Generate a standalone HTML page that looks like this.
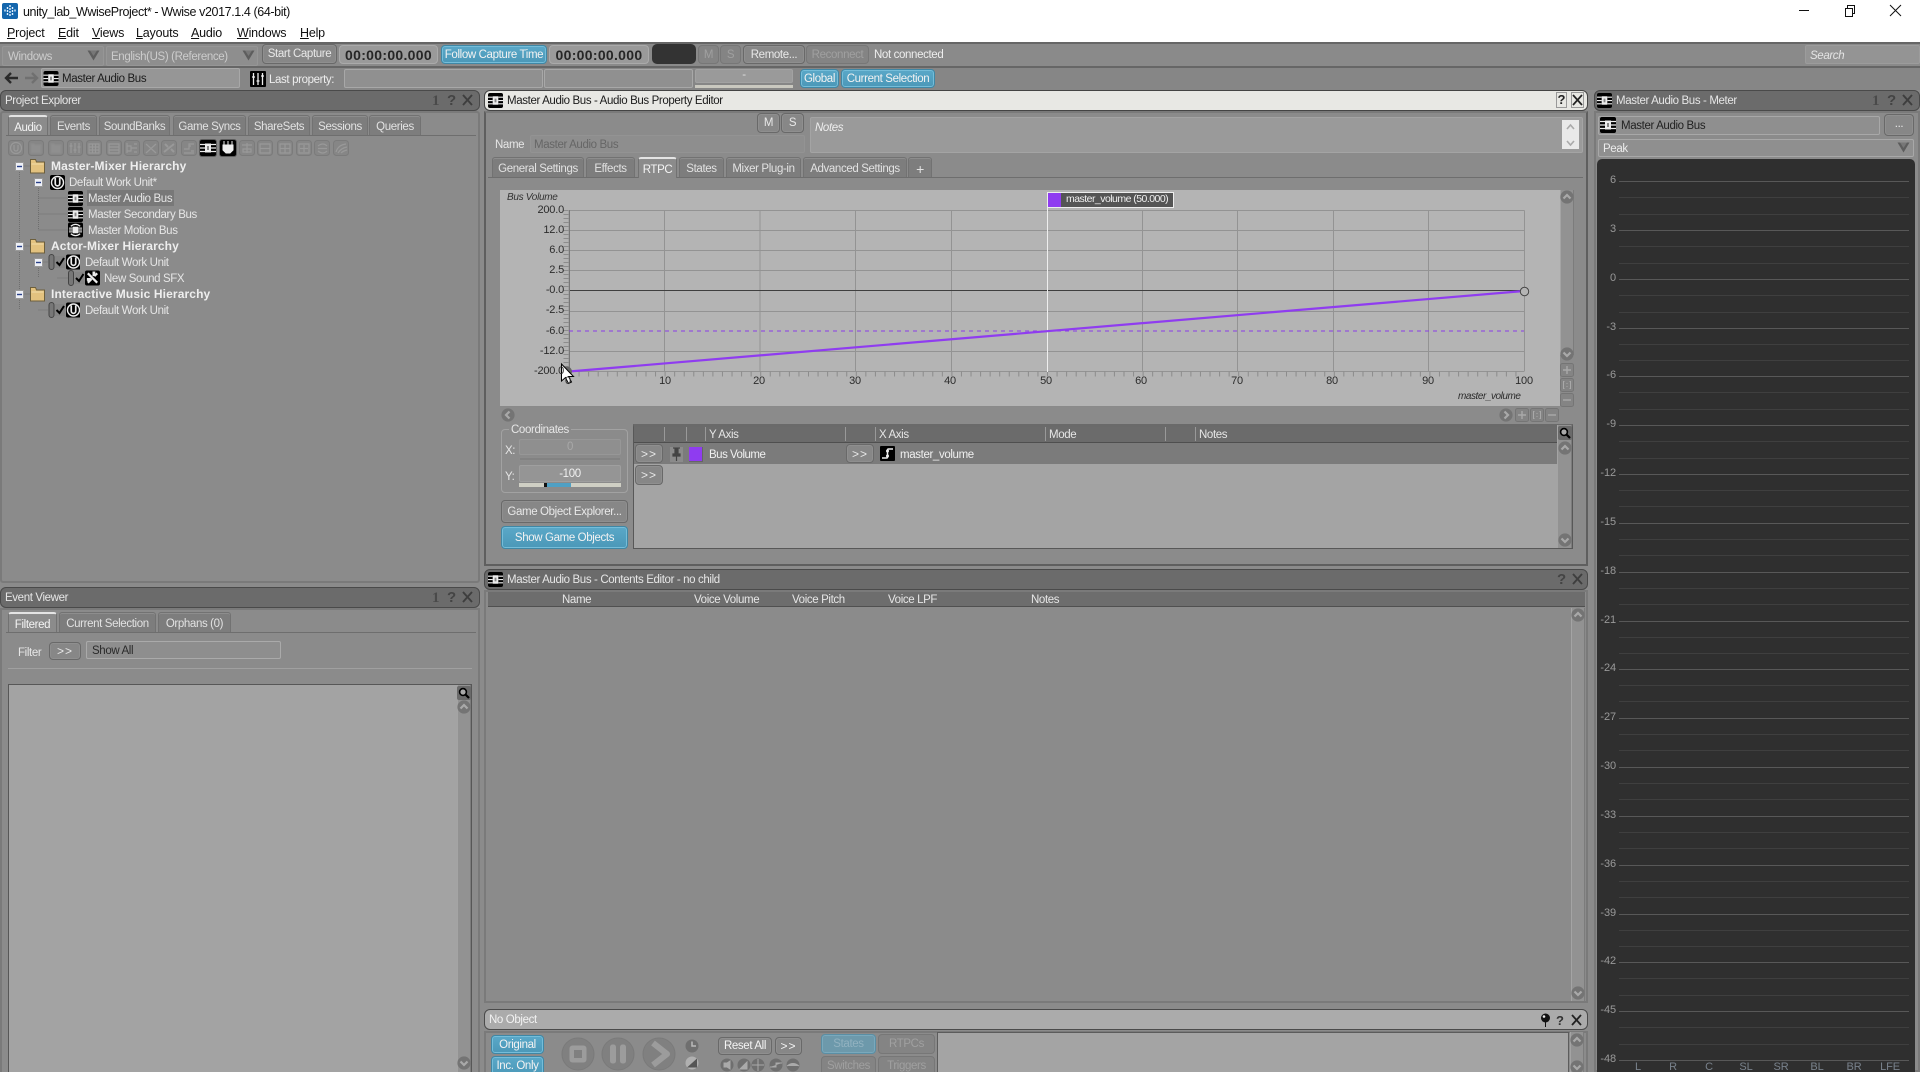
<!DOCTYPE html>
<html><head><meta charset="utf-8"><title>Wwise</title>
<style>
*{box-sizing:border-box}
html,body{margin:0;padding:0;width:1920px;height:1072px;overflow:hidden;background:#8b8b8b}
body{position:relative;font:11.5px "Liberation Sans",sans-serif;letter-spacing:-.37px;color:#e6e6e6}
div,svg.a{position:absolute;display:block}
p{position:absolute;margin:0;white-space:nowrap;line-height:14px}
p:not([class]){padding-top:1px}
.b{display:flex;align-items:center;justify-content:center;border:1px solid #696969;border-radius:4px;background:#878787;color:#e8e8e8;white-space:nowrap;box-shadow:inset 0 0 0 1px #8f8f8f}
.bl{background:linear-gradient(#5aa8c8,#4b98b8);border:1px solid #3f87a5;box-shadow:inset 0 0 0 1px #75bdd9;color:#f2f2f2}
.dis{color:#a0a0a0;background:#848484;border-color:#777;box-shadow:none}
.in{background:#969696;border:1px solid #a8a8a8;border-radius:2px;color:#2a2a2a}
.tt{background:#6b6b6b;border:1px solid #4a4a4a;border-radius:6px;height:21px;color:#e8e8e8}
.tab{top:115px;height:20px;padding-top:3px;background:#7d7d7d;border:1px solid #727272;border-bottom:0;border-radius:3px 3px 0 0;box-shadow:inset 0 1px 0 #8d8d8d;color:#e2e2e2;display:flex;align-items:center;justify-content:center}
.on{background:#8b8b8b;border-top:2px solid #e4e4e4;color:#f4f4f4}
.sb{background:#929292;border-left:1px solid #a4a4a4;border-right:1px solid #7c7c7c}
.dk{color:#2c2c2c;font-size:11px;letter-spacing:-.2px}
.ml{color:#999;left:1583px;width:33px;text-align:right;font-size:11px;letter-spacing:-.1px}
.ch{color:#79828c;top:1060px;font-size:11px;width:30px;text-align:center;letter-spacing:-.1px}
.h{font-weight:bold;color:#eee;font-size:12px;letter-spacing:.12px}
.g{letter-spacing:1px;font-size:12px}
.m{color:#111;font-size:12.5px;letter-spacing:-.2px;top:26px}
.tm{background:#9a9a9a;border-color:#aaa;color:#262626;font-weight:bold;font-size:14px;letter-spacing:.3px;box-shadow:none}
</style></head><body>

<svg width="0" height="0" style="position:absolute"><defs>
<symbol id="bus" viewBox="0 0 16 16"><rect width="16" height="16" rx="2" fill="#000"/><rect x="5" y="3.5" width="6" height="9" fill="#eee"/><path d="M0 4.5h5M0 8h5M0 11.5h5M11 4.5h5M11 8h5M11 11.5h5" stroke="#eee" stroke-width="1.2"/><rect x="7" y="6" width="2" height="4" fill="#888"/></symbol>
<symbol id="mot" viewBox="0 0 16 16"><rect width="16" height="16" rx="2" fill="#000"/><path d="M3 4Q8 0 13 4M3 12Q8 16 13 12" stroke="#eee" fill="none" stroke-width="1.4"/><rect x="5" y="4.5" width="6" height="7" fill="#eee"/><path d="M1 6h4M1 8h4M1 10h4M11 6h4M11 8h4M11 10h4" stroke="#eee"/></symbol>
<symbol id="wu" viewBox="0 0 16 16"><rect width="16" height="16" rx="2" fill="#000"/><circle cx="8" cy="8" r="6.4" fill="none" stroke="#eee" stroke-width="1.5"/><path d="M5.6 3v6.2a2.4 2.4 0 0 0 4.8 0V3" fill="none" stroke="#eee" stroke-width="1.8"/></symbol>
<symbol id="sfx" viewBox="0 0 16 16"><rect width="16" height="16" rx="2" fill="#000"/><path d="M3 3l10 10M3 13l4-4M10 6l3-3" stroke="#eee" stroke-width="2.4"/><path d="M8 1h3v5H8zM2 8h4v3H2z" fill="#eee"/></symbol>
<symbol id="fold" viewBox="0 0 15 16"><path d="M.5 4V1.5h5l1 2.5h8v11H.5z" fill="#e3c27f" stroke="#6d5f3c"/><path d="M1.5 6h12" stroke="#f2dca8"/></symbol>
<symbol id="plus" viewBox="0 0 9 9"><rect x=".5" y=".5" width="8" height="8" fill="#eef0f6" stroke="#999"/><path d="M2 4.5h5" stroke="#28408a" stroke-width="1.4"/></symbol>
<symbol id="up" viewBox="0 0 14 14"><circle cx="7" cy="7" r="6.6" fill="#747474"/><path d="M3.5 8.5L7 5l3.5 3.5" fill="none" stroke="#a9a9a9" stroke-width="2.2"/></symbol>
<symbol id="dn" viewBox="0 0 14 14"><circle cx="7" cy="7" r="6.6" fill="#747474"/><path d="M3.5 5.5L7 9l3.5-3.5" fill="none" stroke="#a9a9a9" stroke-width="2.2"/></symbol>
<symbol id="lf" viewBox="0 0 14 14"><circle cx="7" cy="7" r="6.6" fill="#747474"/><path d="M8.5 3.5L5 7l3.5 3.5" fill="none" stroke="#a9a9a9" stroke-width="2.2"/></symbol>
<symbol id="rt" viewBox="0 0 14 14"><circle cx="7" cy="7" r="6.6" fill="#747474"/><path d="M5.5 3.5L9 7l-3.5 3.5" fill="none" stroke="#a9a9a9" stroke-width="2.2"/></symbol>
<symbol id="mag" viewBox="0 0 14 14"><rect width="14" height="14" rx="2" fill="#6a6a6a"/><circle cx="6" cy="6" r="3.4" fill="#aaa" stroke="#000" stroke-width="1.6"/><path d="M8.5 8.5l3.5 3.5" stroke="#000" stroke-width="2.2"/></symbol>
<symbol id="dd" viewBox="0 0 13 11"><path d="M.5 .5h12L6.5 10.5z" fill="#5d5d5d"/><path d="M3 .5h7L6.5 6z" fill="#777"/></symbol>
<symbol id="chk" viewBox="0 0 32 16"><rect x="1" y=".5" width="5" height="15" rx="2.5" fill="#777" stroke="#444"/><rect x="7" y="2" width="10" height="12" fill="#858585"/><path d="M8.5 8l3 3 4.5-7" fill="none" stroke="#000" stroke-width="2"/></symbol>
<symbol id="plusb" viewBox="0 0 14 14"><rect x=".5" y=".5" width="13" height="13" rx="2" fill="#848484" stroke="#757575"/><path d="M3 7h8M7 3v8" stroke="#a9a9a9" stroke-width="1.4"/></symbol>
<symbol id="fit" viewBox="0 0 14 14"><rect x=".5" y=".5" width="13" height="13" rx="2" fill="#848484" stroke="#757575"/><path d="M4.5 3.5h-1v7h1M9.5 3.5h1v7h-1M7 5v1M7 8v1" fill="none" stroke="#a9a9a9"/></symbol>
<symbol id="minb" viewBox="0 0 14 14"><rect x=".5" y=".5" width="13" height="13" rx="2" fill="#848484" stroke="#757575"/><path d="M3 7h8" stroke="#a9a9a9" stroke-width="1.4"/></symbol>
<symbol id="gi" viewBox="0 0 16 16"><rect x=".5" y=".5" width="15" height="15" rx="3" fill="#868686" stroke="#7b7b7b"/></symbol>
<symbol id="q1" viewBox="0 0 46 16"><text x="2" y="13" font-size="15" font-weight="bold" font-family="Liberation Serif,serif" fill="#4a4a4a" letter-spacing="0">1</text><text x="17" y="13" font-size="15" font-weight="bold" font-family="Liberation Sans,sans-serif" fill="#444" letter-spacing="0">?</text><path d="M33 3l9 10M42 3l-9 10" stroke="#3e3e3e" stroke-width="1.9"/></symbol>
<symbol id="q2" viewBox="0 0 30 16"><text x="2" y="13" font-size="15" font-weight="bold" font-family="Liberation Sans,sans-serif" fill="#444" letter-spacing="0">?</text><path d="M18 3l9 10M27 3l-9 10" stroke="#3e3e3e" stroke-width="1.9"/></symbol>
</defs></svg>

<!-- title & menu -->
<div style="left:0;top:0;width:1920px;height:42px;background:#fff"></div>
<svg class="a" style="left:2px;top:3px" width="16" height="16" viewBox="0 0 16 16"><rect width="16" height="16" rx="2" fill="#1466ad"/><path d="M8 2v12M5.5 4v8M10.5 4v8M3 6.500v3M13 6.500v3" stroke="#dff0ff" stroke-width="1.4" stroke-dasharray="2 1"/></svg>
<p style="left:23px;top:4px;color:#111;font-size:12.5px;letter-spacing:-.4px">unity_lab_WwiseProject* - Wwise v2017.1.4 (64-bit)</p>
<p class="m" style="left:7px"><u>P</u>roject</p>
<p class="m" style="left:58px"><u>E</u>dit</p>
<p class="m" style="left:92px"><u>V</u>iews</p>
<p class="m" style="left:136px"><u>L</u>ayouts</p>
<p class="m" style="left:191px"><u>A</u>udio</p>
<p class="m" style="left:237px"><u>W</u>indows</p>
<p class="m" style="left:300px"><u>H</u>elp</p>
<svg class="a" style="left:1795px;top:0" width="125" height="22"><path d="M4 10.500h10" stroke="#111"/><path d="M50.500 8.500h7v8h-7zM52.500 8v-2.500h7v8h-2" fill="none" stroke="#111"/><path d="M95 5l11 11M106 5L95 16" stroke="#111"/></svg>

<!-- toolbar -->
<div style="left:0;top:42px;width:1920px;height:2px;background:#666"></div>
<div style="left:0;top:44px;width:1920px;height:22px;background:#8a8a8a"></div>
<div style="left:0;top:66px;width:1920px;height:2px;background:#666"></div>
<div style="left:0;top:68px;width:1920px;height:22px;background:#868686"></div>

<div class="in" style="left:2px;top:46px;width:102px;height:20px;background:#8e8e8e;border-color:#969696"></div>
<p style="left:8px;top:49px;color:#ccc">Windows</p>
<svg class="a" style="left:87px;top:50px" width="13" height="11"><use href="#dd"/></svg>
<div class="in" style="left:106px;top:46px;width:152px;height:20px;background:#8e8e8e;border-color:#969696"></div>
<p style="left:111px;top:49px;color:#ccc">English(US) (Reference)</p>
<svg class="a" style="left:242px;top:50px" width="13" height="11"><use href="#dd"/></svg>
<div class="b" style="left:262px;top:44px;width:75px;height:20px">Start Capture</div>
<div class="b tm" style="left:339px;top:45px;width:99px;height:19px">00:00:00.000</div>
<div class="b bl" style="left:441px;top:45px;width:106px;height:19px">Follow Capture Time</div>
<div class="b tm" style="left:549px;top:45px;width:100px;height:19px">00:00:00.000</div>
<div style="left:652px;top:44px;width:44px;height:20px;background:#333;border-radius:5px"></div>
<div class="b dis" style="left:698px;top:45px;width:21px;height:19px">M</div>
<div class="b dis" style="left:720px;top:45px;width:21px;height:19px">S</div>
<div class="b" style="left:743px;top:45px;width:62px;height:19px">Remote...</div>
<div class="b dis" style="left:806px;top:45px;width:63px;height:19px">Reconnect</div>
<p style="left:874px;top:47px;color:#eee">Not connected</p>
<div class="in" style="left:1805px;top:45px;width:115px;height:19px;background:#949494;border-color:#9c9c9c"></div>
<p style="left:1810px;top:48px;color:#e4e4e4;font-style:italic">Search</p>

<svg class="a" style="left:3px;top:70px" width="36" height="16"><path d="M15 8H3M8 3L3 8l5 5" fill="none" stroke="#2a2a2a" stroke-width="2.4"/><path d="M22 8h12M29 3l5 5-5 5" fill="none" stroke="#707070" stroke-width="2.4"/></svg>
<div class="in" style="left:41px;top:68px;width:199px;height:20px"></div>
<svg class="a" style="left:43px;top:71px" width="16" height="15"><use href="#bus"/></svg>
<p style="left:62px;top:71px;color:#1c1c1c">Master Audio Bus</p>
<svg class="a" style="left:250px;top:71px" width="16" height="16" viewBox="0 0 16 16"><rect width="16" height="16" rx="1" fill="#000"/><path d="M3.500 2v12M8 2v12M12.500 2v12M2 6h3M6.500 10h3M11 5h3" stroke="#eee" stroke-width="1.3"/></svg>
<p style="left:269px;top:72px;color:#eee">Last property:</p>
<div class="in" style="left:344px;top:69px;width:199px;height:19px;background:#909090"></div>
<div class="in" style="left:544px;top:69px;width:149px;height:19px;background:#909090"></div>
<div style="left:695px;top:69px;width:98px;height:14px;background:#9a9a9a;border:1px solid #a2a2a2;border-radius:2px;color:#ddd;text-align:center;line-height:11px">-</div>
<div style="left:695px;top:85px;width:98px;height:3px;background:#c9c8bf"></div>
<div class="b bl" style="left:800px;top:69px;width:39px;height:19px">Global</div>
<div class="b bl" style="left:841px;top:69px;width:94px;height:19px">Current Selection</div>

<!-- Project Explorer -->
<div class="tt" style="left:0;top:90px;width:480px"></div>
<p style="left:5px;top:93px">Project Explorer</p>
<svg class="a" style="left:430px;top:92px" width="46" height="16"><use href="#q1"/></svg>
<div style="left:0;top:111px;width:480px;height:472px;border:2px solid #7a7a7a;background:#8b8b8b;border-radius:3px"></div>
<div style="left:6px;top:135px;width:470px;height:1px;background:#6e6e6e"></div>
<div class="tab on" style="left:8px;width:40px">Audio</div>
<div class="tab" style="left:50px;width:47px">Events</div>
<div class="tab" style="left:99px;width:71px">SoundBanks</div>
<div class="tab" style="left:173px;width:73px">Game Syncs</div>
<div class="tab" style="left:248px;width:62px">ShareSets</div>
<div class="tab" style="left:312px;width:56px">Sessions</div>
<div class="tab" style="left:369px;width:52px">Queries</div>

<svg class="a" style="left:0;top:130px" width="360" height="30">
<g><use href="#gi" x="8" y="10" width="16" height="16"/><use href="#gi" x="28" y="10" width="16" height="16"/><use href="#gi" x="48" y="10" width="16" height="16"/><use href="#gi" x="67" y="10" width="16" height="16"/><use href="#gi" x="86" y="10" width="16" height="16"/><use href="#gi" x="106" y="10" width="16" height="16"/><use href="#gi" x="124" y="10" width="16" height="16"/><use href="#gi" x="143" y="10" width="16" height="16"/><use href="#gi" x="161" y="10" width="16" height="16"/><use href="#gi" x="181" y="10" width="16" height="16"/><use href="#gi" x="239" y="10" width="16" height="16"/><use href="#gi" x="257" y="10" width="16" height="16"/><use href="#gi" x="277" y="10" width="16" height="16"/><use href="#gi" x="296" y="10" width="16" height="16"/><use href="#gi" x="314" y="10" width="16" height="16"/><use href="#gi" x="333" y="10" width="16" height="16"/></g>
<g fill="none" stroke="#999" stroke-width="1.2">
<circle cx="16" cy="18" r="5.500"/><path d="M14 15v4a2 2 0 0 0 4 0v-4"/>
<path d="M31 23v-9h3l1 1h6v8zM51 23v-9h3l1 1h6v8z" fill="#8f8f8f" stroke="#8c8c8c"/>
<path d="M71 13v10M75 13v10M79 13v10M69.500 16h3M73.500 20h3M77.500 17h3"/>
<path d="M89 14h10v9H89zM89 17h10M89 20h10M92.500 14v9M95.500 14v9"/>
<path d="M109 14h10v9h-10zM109 17h10M109 20h10"/>
<path d="M127 13v10M127 16h4v5h-4M134 14h3M134 18h3M131 18h3M134 22h3"/>
<path d="M146 14l10 9M156 14l-10 9"/>
<path d="M164 22l10-8M165 14l3 3M171 19l3 3" stroke-width="2"/>
<path d="M184 23h10M184 19h5v-5h5M189 16h2M191 21h3"/>
<path d="M242 15h10M247 13v10M243 19h8v3h-8z"/>
<path d="M260 14h10v9h-10zM260 18.500h10"/>
<path d="M280 14h10v9h-10zM285 14v9M280 18.500h10"/>
<path d="M299 14h10v9h-10zM304 15v7M300 18.500h8"/>
<path d="M318 16q5-4 9 0M318 21q5 4 9 0M318 18.500h9"/>
<path d="M336 22q2-7 10-8M338 23q3-5 9-6M341 23q2-2 6-3"/>
</g>
<rect x="199" y="9" width="18" height="18" rx="3" fill="#5c5c5c"/><use href="#bus" x="200" y="10" width="16" height="16"/>
<rect x="219" y="9" width="18" height="18" rx="3" fill="#5c5c5c"/><rect x="220" y="10" width="16" height="16" rx="2" fill="#000"/><path d="M224 11v4M228 11v4M232 11v4M223 15h10v5l-3 3h-4l-3-3z" fill="#eee" stroke="#eee"/>
</svg>

<svg class="a" style="left:0;top:155px" width="200" height="170"><path d="M19.500 11V155M19.500 11H30M38.500 27V75M38.500 43H68M38.500 59H68M38.500 75H68M19.500 91H30M38.500 107V123M38.500 107H48M57.500 123H68M19.500 139H30M38.500 155H48" stroke="#6e6e6e" stroke-dasharray="1 1" fill="none"/></svg>
<svg class="a" style="left:15px;top:162px" width="9" height="9"><use href="#plus"/></svg>
<svg class="a" style="left:30px;top:158px" width="15" height="16"><use href="#fold"/></svg>
<p class="h" style="left:51px;top:159px">Master-Mixer Hierarchy</p>
<svg class="a" style="left:34px;top:178px" width="9" height="9"><use href="#plus"/></svg>
<svg class="a" style="left:50px;top:175px" width="15" height="15"><use href="#wu"/></svg>
<p style="left:69px;top:175px">Default Work Unit*</p>
<svg class="a" style="left:68px;top:191px" width="15" height="15"><use href="#bus"/></svg>
<div style="left:87px;top:190px;width:87px;height:16px;background:#787878"></div>
<p style="left:88px;top:191px">Master Audio Bus</p>
<svg class="a" style="left:68px;top:207px" width="15" height="15"><use href="#bus"/></svg>
<p style="left:88px;top:207px">Master Secondary Bus</p>
<svg class="a" style="left:68px;top:222px" width="15" height="16"><use href="#mot"/></svg>
<p style="left:88px;top:223px">Master Motion Bus</p>
<svg class="a" style="left:15px;top:242px" width="9" height="9"><use href="#plus"/></svg>
<svg class="a" style="left:30px;top:238px" width="15" height="16"><use href="#fold"/></svg>
<p class="h" style="left:51px;top:239px">Actor-Mixer Hierarchy</p>
<svg class="a" style="left:34px;top:258px" width="9" height="9"><use href="#plus"/></svg>
<svg class="a" style="left:48px;top:254px" width="32" height="16"><use href="#chk"/><use href="#wu" x="18" y="0.5" width="15" height="15"/></svg>
<p style="left:85px;top:255px">Default Work Unit</p>
<svg class="a" style="left:67px;top:270px" width="33" height="16"><use href="#chk"/><use href="#sfx" x="18" y="0.5" width="15" height="15"/></svg>
<p style="left:104px;top:271px">New Sound SFX</p>
<svg class="a" style="left:15px;top:290px" width="9" height="9"><use href="#plus"/></svg>
<svg class="a" style="left:30px;top:286px" width="15" height="16"><use href="#fold"/></svg>
<p class="h" style="left:51px;top:287px">Interactive Music Hierarchy</p>
<svg class="a" style="left:48px;top:302px" width="32" height="16"><use href="#chk"/><use href="#wu" x="18" y="0.5" width="15" height="15"/></svg>
<p style="left:85px;top:303px">Default Work Unit</p>

<!-- Event Viewer -->
<div class="tt" style="left:0;top:587px;width:480px"></div>
<p style="left:5px;top:590px">Event Viewer</p>
<svg class="a" style="left:430px;top:589px" width="46" height="16"><use href="#q1"/></svg>
<div style="left:0;top:608px;width:480px;height:464px;border:2px solid #7a7a7a;border-bottom:0;background:#8b8b8b"></div>
<div style="left:6px;top:632px;width:470px;height:1px;background:#6e6e6e"></div>
<div class="tab on" style="left:8px;top:612px;width:49px">Filtered</div>
<div class="tab" style="left:59px;top:612px;width:97px">Current Selection</div>
<div class="tab" style="left:158px;top:612px;width:73px">Orphans (0)</div>
<p style="left:18px;top:645px">Filter</p>
<div class="b g" style="left:49px;top:642px;width:32px;height:18px">&gt;&gt;</div>
<div class="in" style="left:86px;top:641px;width:195px;height:18px;background:#8e8e8e;border-color:#aaa"></div>
<p style="left:92px;top:643px;color:#2b2b2b">Show All</p>
<div style="left:8px;top:668px;width:464px;height:1px;background:#a0a0a0"></div>
<div style="left:8px;top:684px;width:464px;height:388px;background:#a3a3a3;border:1px solid #575757;border-bottom:0"></div>
<div class="sb" style="left:457px;top:685px;width:14px;height:387px"></div>
<svg class="a" style="left:457px;top:686px" width="14" height="14"><use href="#mag"/></svg>
<svg class="a" style="left:457px;top:700px" width="14" height="14"><use href="#up"/></svg>
<svg class="a" style="left:457px;top:1056px" width="14" height="14"><use href="#dn"/></svg>

<!-- Property editor -->
<div style="left:484px;top:90px;width:1104px;height:21px;background:#e8e8e4;border:1px solid #444;border-radius:6px"></div>
<svg class="a" style="left:488px;top:93px" width="15" height="15"><use href="#bus"/></svg>
<p style="left:507px;top:93px;color:#1b1b1b">Master Audio Bus - Audio Bus Property Editor</p>
<div style="left:1556px;top:92px;width:11px;height:16px;border:1px solid #999;color:#222;font-weight:bold;font-size:13px;line-height:14px;text-align:center;letter-spacing:0">?</div>
<svg class="a" style="left:1571px;top:92px" width="13" height="16"><rect x=".5" y=".5" width="12" height="15" fill="none" stroke="#999"/><path d="M2 3l9 10M11 3l-9 10" stroke="#222" stroke-width="1.7"/></svg>
<div style="left:484px;top:111px;width:1104px;height:455px;border:2px solid #5f5f5f;border-top:2px solid #7a7a7a;background:#8b8b8b"></div>
<div class="b" style="left:757px;top:113px;width:23px;height:20px">M</div>
<div class="b" style="left:781px;top:113px;width:23px;height:20px">S</div>
<p style="left:495px;top:137px">Name</p>
<div class="in" style="left:530px;top:135px;width:275px;height:18px;background:#8e8e8e;border-color:#939393"></div>
<p style="left:534px;top:137px;color:#666">Master Audio Bus</p>
<div class="in" style="left:810px;top:117px;width:773px;height:36px;background:#9a9a9a;border-color:#a4a4a4"></div>
<p style="left:815px;top:120px;font-style:italic;color:#eee">Notes</p>
<div style="left:1562px;top:120px;width:17px;height:29px;background:#e9e9e9"></div>
<svg class="a" style="left:1562px;top:120px" width="17" height="29"><path d="M5 9l3.500-4 3.500 4M5 21l3.500 4 3.500-4" fill="none" stroke="#aaa" stroke-width="1.6"/></svg>
<div style="left:488px;top:177px;width:1095px;height:1px;background:#6e6e6e"></div>
<div class="tab" style="left:492px;top:157px;width:92px">General Settings</div>
<div class="tab" style="left:586px;top:157px;width:49px">Effects</div>
<div class="tab on" style="left:638px;top:157px;width:39px;height:21px">RTPC</div>
<div class="tab" style="left:679px;top:157px;width:45px">States</div>
<div class="tab" style="left:726px;top:157px;width:75px">Mixer Plug-in</div>
<div class="tab" style="left:803px;top:157px;width:104px">Advanced Settings</div>
<div class="tab" style="left:908px;top:157px;width:24px;font-size:14px">+</div>

<!-- graph -->
<div style="left:500px;top:190px;width:1060px;height:217px;background:#b4b4b4;border-bottom:1px solid #8a8a8a"></div>
<svg class="a" style="left:0;top:0" width="1920" height="1072">
<path d="M569 210.500V371M664.500 210.500V371M760 210.500V371M855.500 210.500V371M951.500 210.500V371M1142.500 210.500V371M1237.500 210.500V371M1333.500 210.500V371M1428.500 210.500V371M1524.500 210.500V371" stroke="#939393"/>
<path d="M569 210.500H1524.500M569 230.500H1524.500M569 250.500H1524.500M569 270.500H1524.500M569 311.500H1524.500M569 351.500H1524.500M569 371.500H1524.500" stroke="#939393"/>
<path d="M569 290.500H1524.500" stroke="#3f3f3f"/>
<path d="M569.500 210V372" stroke="#777"/>
<path d="M566 210V371" stroke="#8c8c8c" stroke-width="5" stroke-dasharray="1 3"/>
<path d="M569 374H1524" stroke="#8c8c8c" stroke-width="5" stroke-dasharray="1 8.560"/>
<path d="M569 331H1524" stroke="#8a3be8" stroke-dasharray="4 4"/>
<path d="M1047.500 207V372" stroke="#eee"/>
<path d="M569 371.500L1524 291" stroke="#8f3cf0" stroke-width="2.200"/>
<circle cx="1524.500" cy="291.500" r="4.200" fill="#b4b4b4" stroke="#444"/>
<circle cx="567" cy="371.500" r="5" fill="#666"/>
<path d="M561.500 364V381l4-3.500 3 6 3-1.500-3-5.500h5z" fill="#fff" stroke="#000"/>
</svg>
<p style="left:507px;top:190px;font-style:italic;font-size:10px;color:#333;letter-spacing:-.3px">Bus Volume</p>
<p class="dk" style="left:520px;top:203px;width:44px;text-align:right">200.0</p>
<p class="dk" style="left:520px;top:223px;width:44px;text-align:right">12.0</p>
<p class="dk" style="left:520px;top:243px;width:44px;text-align:right">6.0</p>
<p class="dk" style="left:520px;top:263px;width:44px;text-align:right">2.5</p>
<p class="dk" style="left:520px;top:283px;width:44px;text-align:right">-0.0</p>
<p class="dk" style="left:520px;top:303px;width:44px;text-align:right">-2.5</p>
<p class="dk" style="left:520px;top:324px;width:44px;text-align:right">-6.0</p>
<p class="dk" style="left:520px;top:344px;width:44px;text-align:right">-12.0</p>
<p class="dk" style="left:520px;top:364px;width:44px;text-align:right">-200.0</p>
<p class="dk" style="left:548px;top:374px;width:40px;text-align:center">0</p>
<p class="dk" style="left:645px;top:374px;width:40px;text-align:center">10</p>
<p class="dk" style="left:739px;top:374px;width:40px;text-align:center">20</p>
<p class="dk" style="left:835px;top:374px;width:40px;text-align:center">30</p>
<p class="dk" style="left:930px;top:374px;width:40px;text-align:center">40</p>
<p class="dk" style="left:1026px;top:374px;width:40px;text-align:center">50</p>
<p class="dk" style="left:1121px;top:374px;width:40px;text-align:center">60</p>
<p class="dk" style="left:1217px;top:374px;width:40px;text-align:center">70</p>
<p class="dk" style="left:1312px;top:374px;width:40px;text-align:center">80</p>
<p class="dk" style="left:1408px;top:374px;width:40px;text-align:center">90</p>
<p class="dk" style="left:1504px;top:374px;width:40px;text-align:center">100</p>
<p class="dk" style="left:1458px;top:390px;font-style:italic;font-size:10px;letter-spacing:-.45px">master_volume</p>
<div style="left:1047px;top:192px;width:127px;height:16px;background:#555;border:1px solid #eee"></div>
<div style="left:1048px;top:193px;width:13px;height:14px;background:#8f3cf0"></div>
<p class="t" style="left:1066px;top:192px;font-size:10.5px;color:#f0f0f0;letter-spacing:-.53px">master_volume (50.000)</p>

<div class="sb" style="left:1560px;top:190px;width:14px;height:165px"></div>
<svg class="a" style="left:1560px;top:190px" width="14" height="14"><use href="#up"/></svg>
<svg class="a" style="left:1560px;top:347px" width="14" height="14"><use href="#dn"/></svg>
<svg class="a" style="left:1560px;top:363px" width="14" height="14"><use href="#plusb"/></svg>
<svg class="a" style="left:1560px;top:378px" width="14" height="14"><use href="#fit"/></svg>
<svg class="a" style="left:1560px;top:393px" width="14" height="14"><use href="#minb"/></svg>
<svg class="a" style="left:501px;top:408px" width="14" height="14"><use href="#lf"/></svg>
<svg class="a" style="left:1499px;top:408px" width="14" height="14"><use href="#rt"/></svg>
<svg class="a" style="left:1515px;top:408px" width="14" height="14"><use href="#plusb"/></svg>
<svg class="a" style="left:1530px;top:408px" width="14" height="14"><use href="#fit"/></svg>
<svg class="a" style="left:1545px;top:408px" width="14" height="14"><use href="#minb"/></svg>

<!-- coordinates -->
<div style="left:501px;top:429px;width:127px;height:64px;border:1px solid #a2a2a2;border-radius:4px"></div>
<p style="left:509px;top:422px;background:#8b8b8b;padding:1px 2px 0">Coordinates</p>
<p style="left:505px;top:443px">X:</p>
<p style="left:505px;top:469px">Y:</p>
<div style="left:519px;top:439px;width:102px;height:16px;background:#8f8f8f;border:1px solid #979797;border-radius:2px;text-align:center;color:#a8a8a8;line-height:15px">0</div>
<div style="left:519px;top:457px;width:102px;height:4px;background:#828282;border:1px solid #8c8c8c"></div>
<div style="left:519px;top:465px;width:102px;height:17px;background:#959595;border:1px solid #9f9f9f;border-radius:2px;text-align:center;color:#f0f0f0;line-height:16px">-100</div>
<div style="left:519px;top:483px;width:102px;height:4px;background:#cfcfc4"></div>
<div style="left:547px;top:483px;width:24px;height:4px;background:#4fa0c4"></div>
<div style="left:544px;top:483px;width:3px;height:4px;background:#111"></div>
<div class="b" style="left:501px;top:500px;width:127px;height:23px">Game Object Explorer...</div>
<div class="b bl" style="left:501px;top:526px;width:127px;height:23px">Show Game Objects</div>

<!-- list -->
<div style="left:633px;top:424px;width:940px;height:125px;background:#a4a4a4;border:1px solid #585858;border-top:3px solid #6a6a6a"></div>
<div style="left:634px;top:427px;width:923px;height:15px;background:#6b6b6b"></div>
<div style="left:634px;top:442px;width:923px;height:1px;background:#4f4f4f"></div>
<div style="left:634px;top:443px;width:923px;height:21px;background:#7b7b7b"></div>
<svg class="a" style="left:0;top:0" width="1300" height="445"><path d="M664.500 427V441M686.500 427V441M705.500 427V441M845.500 427V441M875.500 427V441M1045.500 427V441M1165.500 427V441M1195.500 427V441" stroke="#999"/></svg>
<p style="left:709px;top:427px">Y Axis</p>
<p style="left:879px;top:427px">X Axis</p>
<p style="left:1049px;top:427px">Mode</p>
<p style="left:1199px;top:427px">Notes</p>
<div class="b g" style="left:635px;top:444px;width:28px;height:19px">&gt;&gt;</div>
<div style="left:670px;top:447px;width:13px;height:15px;background:#8b8b8b"></div>
<svg class="a" style="left:670px;top:447px" width="13" height="15"><path d="M3 1h7M5 1v6H3v2h7V7H8V1M6.500 9v5" fill="#444" stroke="#444" stroke-width="1.2"/></svg>
<div style="left:689px;top:447px;width:14px;height:15px;background:#8f3cf0;border-right:1px solid #666;border-bottom:1px solid #666"></div>
<p style="left:709px;top:447px;color:#f0f0f0;letter-spacing:-.5px">Bus Volume</p>
<div class="b g" style="left:846px;top:444px;width:28px;height:19px">&gt;&gt;</div>
<svg class="a" style="left:880px;top:446px" width="15" height="15" viewBox="0 0 15 15"><rect width="15" height="15" rx="1" fill="#000"/><path d="M13 3H8.500a1 1 0 0 0-1 1v7a1 1 0 0 1-1 1H2" fill="none" stroke="#eee" stroke-width="1.5"/><circle cx="7.500" cy="5" r="1.500" fill="#eee"/><circle cx="7.500" cy="10" r="1.500" fill="#eee"/></svg>
<p style="left:900px;top:447px;color:#f0f0f0">master_volume</p>
<div class="b g" style="left:635px;top:465px;width:28px;height:20px">&gt;&gt;</div>
<div class="sb" style="left:1557px;top:425px;width:15px;height:123px"></div>
<svg class="a" style="left:1558px;top:426px" width="14" height="14"><use href="#mag"/></svg>
<svg class="a" style="left:1558px;top:441px" width="14" height="14"><use href="#up"/></svg>
<svg class="a" style="left:1558px;top:533px" width="14" height="14"><use href="#dn"/></svg>

<!-- Contents editor -->
<div class="tt" style="left:484px;top:569px;width:1104px"></div>
<svg class="a" style="left:488px;top:572px" width="15" height="15"><use href="#bus"/></svg>
<p style="left:507px;top:572px">Master Audio Bus - Contents Editor - no child</p>
<svg class="a" style="left:1555px;top:571px" width="30" height="16"><use href="#q2"/></svg>
<div style="left:484px;top:590px;width:1104px;height:413px;border:2px solid #7a7a7a;background:#8b8b8b"></div>
<div style="left:488px;top:592px;width:1097px;height:15px;background:#6d6d6d;border-bottom:1px solid #505050"></div>
<p style="left:562px;top:592px">Name</p>
<p style="left:694px;top:592px">Voice Volume</p>
<p style="left:792px;top:592px">Voice Pitch</p>
<p style="left:888px;top:592px">Voice LPF</p>
<p style="left:1031px;top:592px">Notes</p>
<div class="sb" style="left:1571px;top:608px;width:14px;height:393px"></div>
<svg class="a" style="left:1571px;top:608px" width="14" height="14"><use href="#up"/></svg>
<svg class="a" style="left:1571px;top:986px" width="14" height="14"><use href="#dn"/></svg>

<!-- No Object -->
<div style="left:484px;top:1009px;width:1104px;height:21px;background:#ababab;border:1px solid #4a4a4a;border-radius:6px"></div>
<p style="left:489px;top:1012px;color:#f2f2f2">No Object</p>
<svg class="a" style="left:1539px;top:1013px" width="46" height="14" viewBox="0 0 46 14"><circle cx="6.500" cy="5" r="4.500" fill="#111"/><circle cx="5" cy="3.500" r="1.300" fill="#eee"/><path d="M6.500 9v5" stroke="#111"/><text x="17" y="12" font-size="13" font-weight="bold" font-family="Liberation Sans,sans-serif" fill="#333" letter-spacing="0">?</text><path d="M33 2l9 10M42 2l-9 10" stroke="#222" stroke-width="1.800"/></svg>
<div style="left:484px;top:1031px;width:1104px;height:41px;border:2px solid #7a7a7a;border-bottom:0;background:#8b8b8b"></div>
<div class="b bl" style="left:491px;top:1035px;width:53px;height:19px">Original</div>
<div class="b bl" style="left:491px;top:1056px;width:53px;height:20px">Inc. Only</div>
<svg class="a" style="left:555px;top:1034px" width="165" height="38" viewBox="0 0 165 38">
<circle cx="23" cy="20" r="16" fill="#808080" stroke="#7a7a7a"/><rect x="14.500" y="11.500" width="17" height="17" rx="3" fill="#9c9c9c"/><rect x="19" y="16" width="8" height="8" fill="#808080"/>
<circle cx="63" cy="20" r="16" fill="#808080" stroke="#7a7a7a"/><rect x="55" y="10.500" width="6" height="19" rx="2.500" fill="#9c9c9c"/><rect x="65" y="10.500" width="6" height="19" rx="2.500" fill="#9c9c9c"/>
<circle cx="104" cy="20" r="16" fill="#808080" stroke="#7a7a7a"/><path d="M98 9l14 11-14 11" fill="none" stroke="#9c9c9c" stroke-width="6" stroke-linejoin="round"/>
<circle cx="137" cy="12" r="6.500" fill="#6f6f6f"/><path d="M137 7.500V12h4" fill="none" stroke="#bbb" stroke-width="1.500"/>
<circle cx="137" cy="29" r="6.500" fill="#b0b0b0"/><path d="M132 33.500l10-9v9z" fill="#555"/>
</svg>
<div class="b" style="left:718px;top:1037px;width:54px;height:18px;color:#f4f4f4">Reset All</div>
<div class="b g" style="left:775px;top:1037px;width:27px;height:18px;color:#f4f4f4">&gt;&gt;</div>
<svg class="a" style="left:720px;top:1057px" width="82" height="15" viewBox="0 0 82 15"><g fill="#6f6f6f"><circle cx="7" cy="8" r="6.500"/><circle cx="24" cy="8" r="6.500"/><circle cx="38" cy="8" r="6.500"/><circle cx="56" cy="8" r="6.500"/><circle cx="73" cy="8" r="6.500"/></g><path d="M4 6h3l3-2v8l-3-2H4zM20 12l7-7v7zM38 2v12M32 8h12M50 10h6V6h6M67 9q6-5 12 0" fill="#aaa" stroke="#aaa"/></svg>
<div class="b dis" style="left:821px;top:1034px;width:55px;height:20px;background:#6d99ab;border-color:#5a8ea4;box-shadow:inset 0 0 0 1px #7aa9bc;color:#92b2c0">States</div>
<div class="b dis" style="left:878px;top:1034px;width:57px;height:20px">RTPCs</div>
<div class="b dis" style="left:821px;top:1056px;width:55px;height:20px">Switches</div>
<div class="b dis" style="left:878px;top:1056px;width:57px;height:20px">Triggers</div>
<div style="left:937px;top:1032px;width:632px;height:40px;background:#a4a4a4;border:1px solid #5c5c5c;border-bottom:0"></div>
<div class="sb" style="left:1570px;top:1032px;width:14px;height:40px"></div>
<svg class="a" style="left:1570px;top:1033px" width="14" height="14"><use href="#up"/></svg>
<svg class="a" style="left:1570px;top:1060px" width="14" height="14"><use href="#dn"/></svg>

<!-- Meter -->
<div class="tt" style="left:1594px;top:90px;width:326px"></div>
<svg class="a" style="left:1597px;top:93px" width="15" height="15"><use href="#bus"/></svg>
<p style="left:1616px;top:93px">Master Audio Bus - Meter</p>
<svg class="a" style="left:1870px;top:92px" width="46" height="16"><use href="#q1"/></svg>
<div style="left:1594px;top:111px;width:326px;height:961px;border:2px solid #7a7a7a;background:#8b8b8b"></div>
<div class="in" style="left:1598px;top:116px;width:282px;height:19px;background:#8f8f8f"></div>
<svg class="a" style="left:1600px;top:117px" width="16" height="16"><use href="#bus"/></svg>
<p style="left:1621px;top:118px;color:#222">Master Audio Bus</p>
<div class="b" style="left:1884px;top:114px;width:30px;height:22px;padding-bottom:2px">...</div>
<div class="in" style="left:1598px;top:139px;width:316px;height:18px;background:#8f8f8f"></div>
<p style="left:1603px;top:141px;color:#ececec">Peak</p>
<svg class="a" style="left:1897px;top:142px" width="13" height="11"><use href="#dd"/></svg>
<div style="left:1597px;top:159px;width:318px;height:913px;background:#2f2f2f;border-radius:5px 5px 0 0"></div>
<svg class="a" style="left:0;top:0" width="1920" height="1072">
<path d="M1619 197.500H1909M1619 214.500H1909M1619 246.500H1909M1619 263.500H1909M1619 295.500H1909M1619 312.500H1909M1619 344.500H1909M1619 360.500H1909M1619 392.500H1909M1619 409.500H1909M1619 441.500H1909M1619 458.500H1909M1619 490.500H1909M1619 506.500H1909M1619 539.500H1909M1619 555.500H1909M1619 588.500H1909M1619 604.500H1909M1619 637.500H1909M1619 653.500H1909M1619 685.500H1909M1619 701.500H1909M1619 734.500H1909M1619 750.500H1909M1619 783.500H1909M1619 799.500H1909M1619 832.500H1909M1619 848.500H1909M1619 881.500H1909M1619 897.500H1909M1619 930.500H1909M1619 946.500H1909M1619 978.500H1909M1619 995.500H1909M1619 1027.500H1909M1619 1044.500H1909" stroke="#3f3f3f"/>
<path d="M1619 181.500H1909M1619 230.500H1909M1619 279.500H1909M1619 328.500H1909M1619 376.500H1909M1619 425.500H1909M1619 474.500H1909M1619 523.500H1909M1619 572.500H1909M1619 621.500H1909M1619 669.500H1909M1619 718.500H1909M1619 767.500H1909M1619 816.500H1909M1619 865.500H1909M1619 914.500H1909M1619 962.500H1909M1619 1011.500H1909M1619 1060.500H1909" stroke="#585858"/>
</svg>
<p class="ml" style="top:173px">6</p><p class="ml" style="top:222px">3</p><p class="ml" style="top:271px">0</p><p class="ml" style="top:320px">-3</p><p class="ml" style="top:368px">-6</p><p class="ml" style="top:417px">-9</p><p class="ml" style="top:466px">-12</p><p class="ml" style="top:515px">-15</p><p class="ml" style="top:564px">-18</p><p class="ml" style="top:613px">-21</p><p class="ml" style="top:661px">-24</p><p class="ml" style="top:710px">-27</p><p class="ml" style="top:759px">-30</p><p class="ml" style="top:808px">-33</p><p class="ml" style="top:857px">-36</p><p class="ml" style="top:906px">-39</p><p class="ml" style="top:954px">-42</p><p class="ml" style="top:1003px">-45</p><p class="ml" style="top:1052px">-48</p>
<p class="ch" style="left:1623px">L</p><p class="ch" style="left:1658px">R</p><p class="ch" style="left:1694px">C</p><p class="ch" style="left:1731px">SL</p><p class="ch" style="left:1766px">SR</p><p class="ch" style="left:1802px">BL</p><p class="ch" style="left:1839px">BR</p><p class="ch" style="left:1875px">LFE</p>
</body></html>
